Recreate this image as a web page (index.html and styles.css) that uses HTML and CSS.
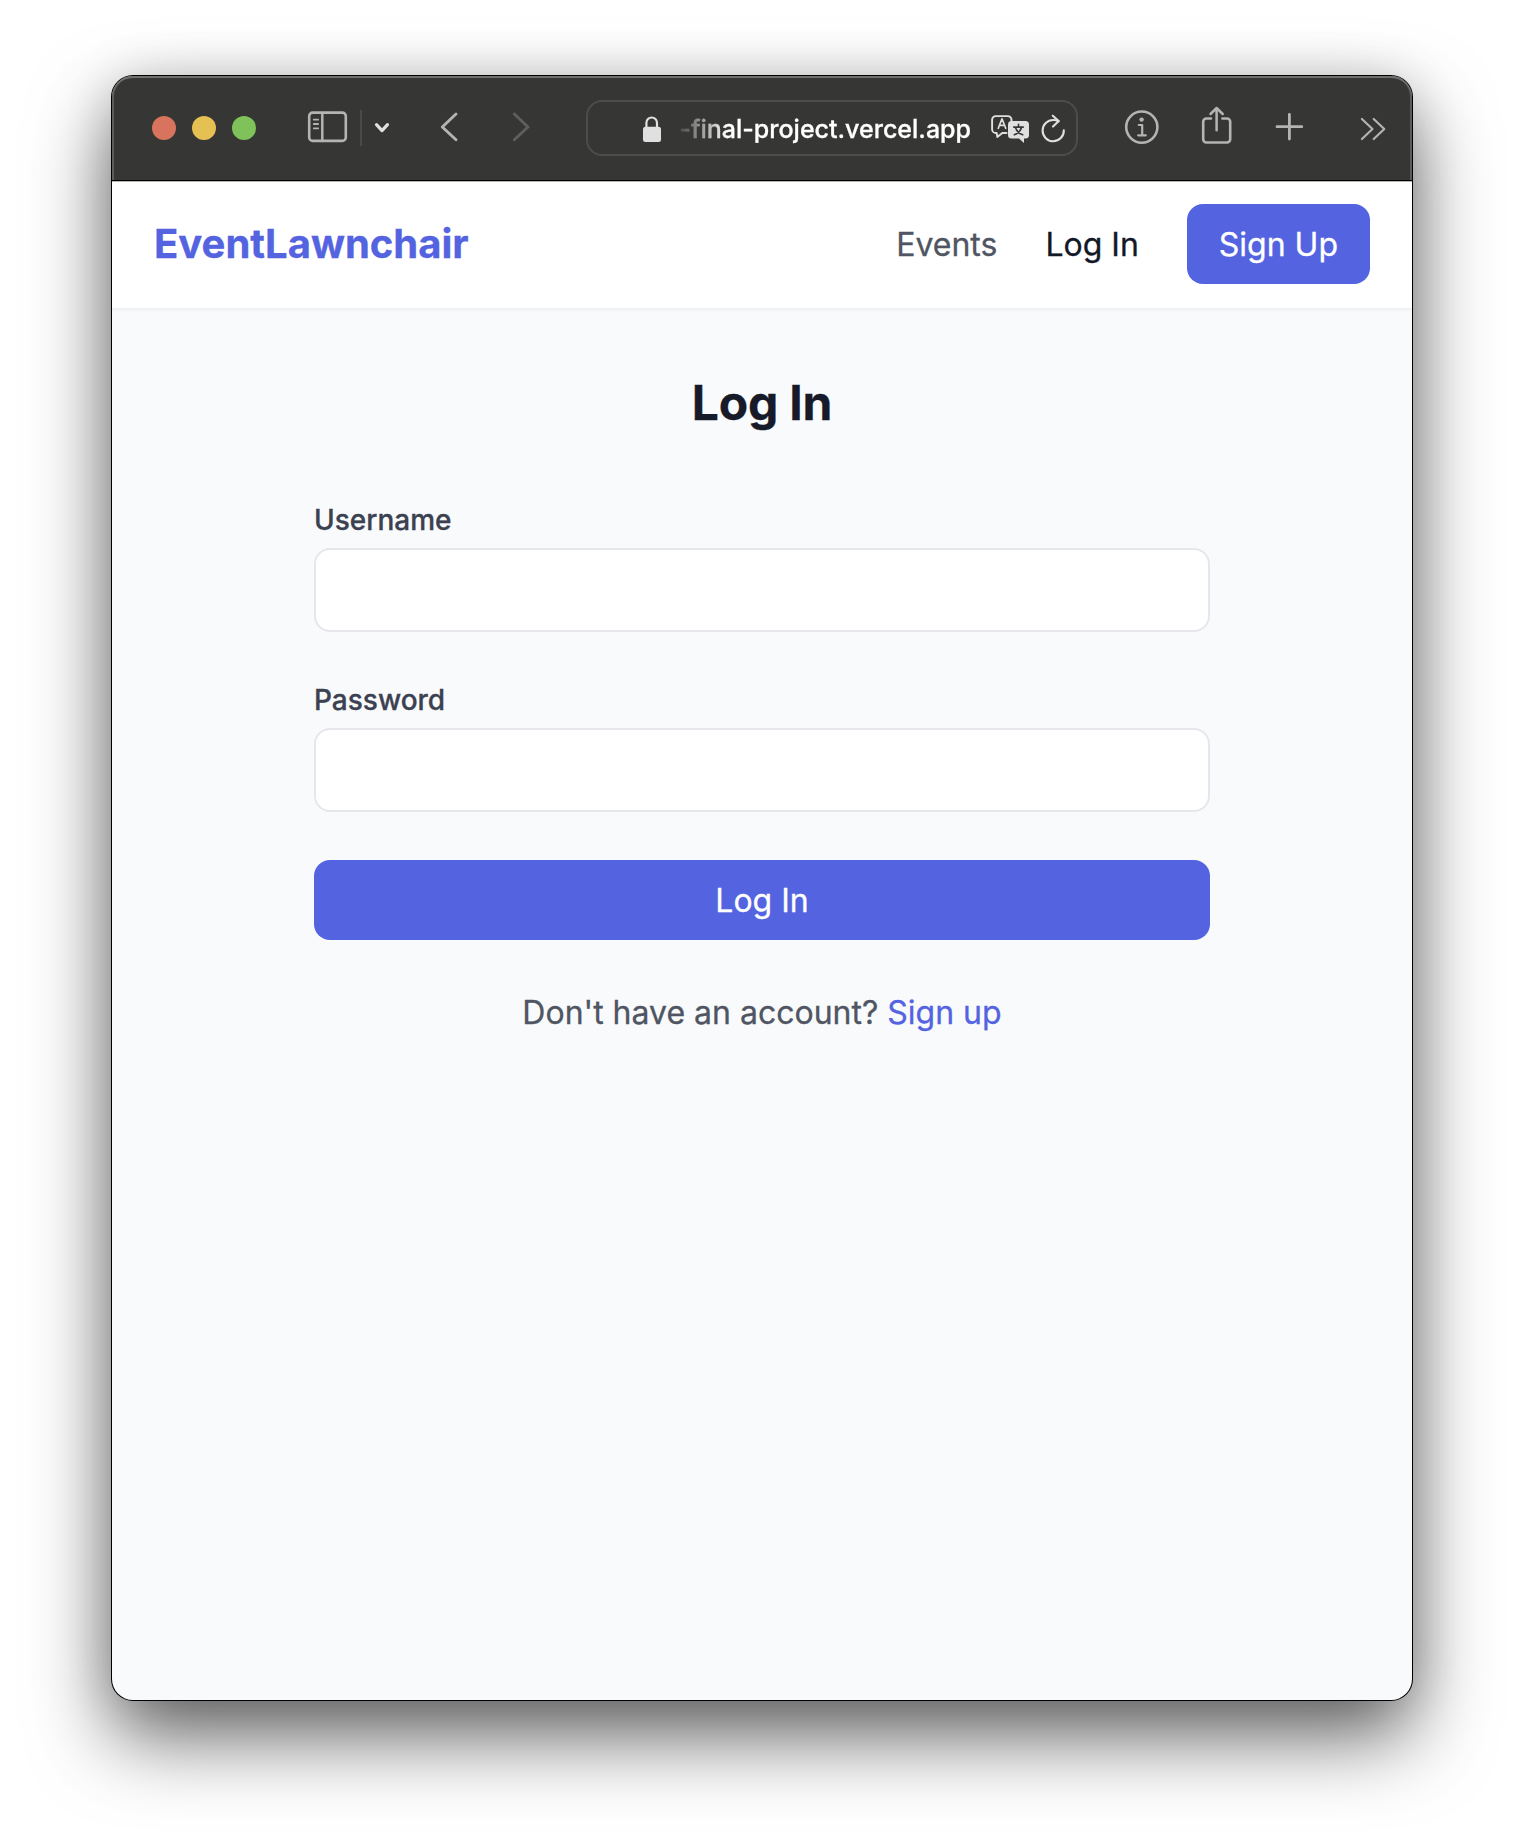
FILE: index.html
```html
<!DOCTYPE html>
<html lang="en">
<head>
<meta charset="utf-8">
<title>EventLawnchair</title>
<link rel="stylesheet" href="styles.css">
</head>
<body>
<div class="window">
  <div class="toolbar">
    <div class="lights">
      <span class="light red"></span>
      <span class="light yellow"></span>
      <span class="light green"></span>
    </div>
    <svg class="icon sidebar" width="48" height="56" viewBox="304 100 48 56"><rect x="309.200" y="112.600" width="36.600" height="28.300" rx="3.500" stroke-width="2.600"/><path d="M322.300 113v28" stroke-width="2.500"/><path d="M313.800 119.700h4.300M313.800 124h4.300M313.800 128.400h4.300" stroke-width="1.800"/></svg>
    <span class="divider"></span>
    <svg class="icon bright chevron" width="24" height="56" viewBox="370 100 24 56"><path d="M376.500 124.700l5.500 5.900 5.500-5.900" stroke-width="3.200"/></svg>
    <svg class="icon back" width="30" height="56" viewBox="434 100 30 56"><path d="M456 114l-13.700 13L456 139.800" stroke-width="2.900"/></svg>
    <svg class="icon dim forward" width="30" height="56" viewBox="506 100 30 56"><path d="M514.300 114l13.700 13-13.700 12.800" stroke-width="2.900"/></svg>
    <div class="address">
      <svg class="icon bright lock" width="28" height="56" viewBox="638 100 28 56"><rect class="solid" x="643" y="126.700" width="18" height="15.300" rx="2.500"/><path d="M646.400 128v-5.200a5.300 5.300 0 0 1 10.600 0v5.200" stroke-width="2.200"/></svg>
      <span class="url">-final-project.vercel.app</span>
      <svg class="icon bright translate" width="48" height="56" viewBox="984 100 48 56"><path d="M1006.500 133l-4.200 0-5 4-.6-4h-.8a3.800 3.800 0 0 1-3.800-3.800v-9.400a3.700 3.700 0 0 1 3.700-3.700h12a3.700 3.700 0 0 1 3.700 3.700v1.500" stroke-width="1.900"/><path d="M998.300 128.300l3.700-9.500 3.700 9.500M999.600 125.400h4.800" stroke-width="1.700"/><path class="solid" d="M1011.500 121h14a3.500 3.500 0 0 1 3.500 3.500v10.500a3.500 3.500 0 0 1-3.500 3.500h-1.500v4.500l-5-4.500h-7.500a3.500 3.500 0 0 1-3.500-3.500v-10.500a3.500 3.500 0 0 1 3.500-3.500z"/><path class="cut" d="M1018.500 124.200v2.600M1013.700 127.100h9.600M1015.500 127.500c1 3.500 3.600 6 7.200 7.300M1021.500 127.500c-1 3.500-3.600 6-7.200 7.300" stroke-width="1.600"/></svg>
      <svg class="icon bright reload" width="32" height="56" viewBox="1038 100 32 56"><path d="M1058.500 121.200c-1.600-.8-3.500-1.200-5.200-1.200a10.600 10.600 0 1 0 10.500 10.400" stroke-width="2.100"/><path d="M1052.800 115.700l5.900 5.300-5.700 5.600" stroke-width="2.100"/></svg>
    </div>
    <svg class="icon info" width="48" height="56" viewBox="1118 100 48 56"><circle cx="1141.800" cy="127.100" r="15.600" stroke-width="2.600"/><circle class="solid" cx="1141.600" cy="119.600" r="2.200"/><path d="M1138.800 125h3.400v10.200M1138.200 135.300h7.600" stroke-width="2.200"/></svg>
    <svg class="icon share" width="40" height="56" viewBox="1196 100 40 56"><path d="M1211 118.500h-4.500a3.300 3.300 0 0 0-3.300 3.300v17.400a3.300 3.300 0 0 0 3.300 3.300h20.400a3.300 3.300 0 0 0 3.300-3.300v-17.400a3.300 3.300 0 0 0-3.300-3.300h-4.500" stroke-width="2.600"/><path d="M1216.600 130.300v-21.800M1210.500 114l6.100-6 6.100 6" stroke-width="2.500"/></svg>
    <svg class="icon plus" width="40" height="56" viewBox="1270 100 40 56"><path d="M1277 126.700h24.800M1289.400 114.300v24.800" stroke-width="2.800"/></svg>
    <svg class="icon more" width="36" height="56" viewBox="1356 100 36 56"><path d="M1361.900 119l10.600 10-10.600 10M1373.700 119l10.600 10-10.600 10" stroke-width="2.200"/></svg>
  </div>
  <nav class="nav">
    <a class="brand">EventLawnchair</a>
    <div class="links">
      <a class="link">Events</a>
      <a class="link active">Log In</a>
      <a class="button signup">Sign Up</a>
    </div>
  </nav>
  <main class="main">
    <h1 class="title">Log In</h1>
    <form class="form">
      <label class="label" for="username">Username</label>
      <input class="input" id="username" type="text">
      <label class="label" for="password">Password</label>
      <input class="input" id="password" type="password">
      <button class="button submit" type="button">Log In</button>
    </form>
    <p class="prompt">Don't have an account? <a class="prompt-link">Sign up</a></p>
  </main>
</div>
</body>
</html>
```
FILE: styles.css
```css
* { box-sizing: border-box; }

body {
  margin: 0;
  height: 1848px;
  padding: 76px 112px 0;
  overflow: hidden;
  background: #fff;
  font-family: Inter, "Liberation Sans", sans-serif;
  font-size: 32px;
  line-height: 48px;
  -webkit-text-stroke-width: .3px;
}

.window {
  position: relative;
  height: 1624px;
  border-radius: 21px;
  background: #f9fafc;
  box-shadow: 0 0 0 1px #000, 0 36px 80px rgba(0, 0, 0, .62), 0 0 50px rgba(0, 0, 0, .12);
}

.toolbar {
  display: flex;
  align-items: center;
  height: 104px;
  padding-left: 40px;
  border-radius: 21px 21px 0 0;
  background: #363634;
  box-shadow: inset 0 2px 0 #70706e, inset 2px 0 0 #5c5c5a, inset -2px 0 0 #5c5c5a;
}

.lights { display: flex; gap: 16px; }
.light { width: 24px; height: 24px; border-radius: 50%; }
.red { background: #d8745e; }
.yellow { background: #e5c053; }
.green { background: #7fc25a; }

.icon {
  flex: none;
  fill: none;
  stroke: #b4b4b3;
  stroke-linecap: round;
  stroke-linejoin: round;
}
.icon .solid { fill: #b4b4b3; stroke: none; }
.bright { stroke: #e0e0e0; }
.bright .solid { fill: #e0e0e0; }
.bright .cut { stroke: #363634; }
.dim { stroke: #5f5f5d; }

.sidebar { margin-left: 48px; }
.divider { width: 2px; height: 36px; margin-left: 8px; background: #4a4a48; }
.chevron { margin-left: 8px; }
.back { margin-left: 40px; }
.forward { margin-left: 42px; }
.info { margin-left: 40px; }
.share { margin-left: 30px; }
.plus { margin-left: 34px; }
.more { margin-left: 46px; }

.address {
  display: flex;
  align-items: center;
  width: 492px;
  height: 56px;
  margin-left: 50px;
  padding-left: 50px;
  border: 2px solid #4d4d4b;
  border-radius: 16px;
}
.url {
  display: flex;
  justify-content: flex-end;
  width: 297px;
  margin-left: 8px;
  padding-top: 2px;
  color: #fff;
  font-size: 25px;
  font-weight: 500;
  line-height: 40px;
  white-space: nowrap;
  -webkit-mask-image: linear-gradient(90deg, transparent, #000 54px);
  mask-image: linear-gradient(90deg, transparent, #000 54px);
}
.translate { margin-left: 13px; }
.reload { margin-left: 6px; }

.nav {
  display: flex;
  align-items: center;
  justify-content: space-between;
  height: 128px;
  padding: 0 42px;
  background: #fff;
  box-shadow: inset 0 1px 0 #000, inset 0 2px 0 #b4b4b4, 0 2px 3px rgba(0, 0, 0, .05);
}
.brand { color: #5463e0; font-size: 40px; font-weight: 700; }
.links { display: flex; align-items: center; gap: 48px; }
.link { padding-top: 2px; color: #4f5562; }
.active { color: #131828; }

.button {
  height: 80px;
  border: 0;
  border-radius: 16px;
  background: #5463e0;
  color: #fff;
  font: inherit;
  line-height: 78px;
  text-align: center;
}
.signup { padding: 2px 32px 0; }

.main { padding: 63px 202px 0; }
.title {
  margin: 0 0 65px;
  color: #171a28;
  font-size: 48px;
  font-weight: 700;
  letter-spacing: -.2px;
  line-height: 64px;
  text-align: center;
}
.form { display: flex; flex-direction: column; }
.label {
  margin-bottom: 8px;
  color: #3b4150;
  font-size: 28px;
  font-weight: 500;
  line-height: 40px;
}
.input {
  height: 84px;
  margin: 0 0 48px;
  padding: 0 24px;
  border: 2px solid #e5e7eb;
  border-radius: 16px;
  background: #fff;
  font: inherit;
}
.submit { padding: 2px 0 0; }
.prompt { margin: 49px 0 0; color: #4f5562; text-align: center; }
.prompt-link { color: #5463e0; }
```
